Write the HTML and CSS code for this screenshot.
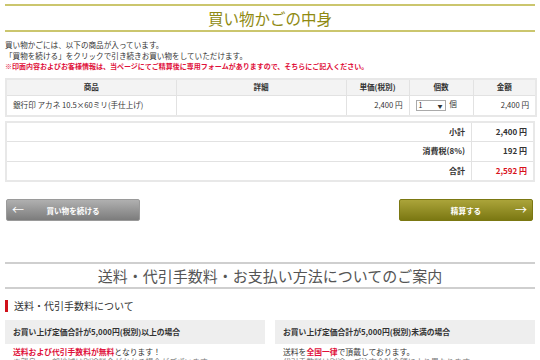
FILE: index.html
```html
<!DOCTYPE html>
<html lang="ja">
<head>
    <meta charset="UTF-8">
    <title>買い物かごの中身</title>
    <link rel="stylesheet" href="styles.css">
</head>
<body>
    <div class="wrap">
        <h2 class="cart-title">買い物かごの中身</h2>
        <div class="intro">
            <p>買い物かごには、以下の商品が入っています。</p>
            <p>「買物を続ける」をクリックで引き続きお買い物をしていただけます。</p>
            <p class="notice">※印面内容およびお客様情報は、当ページにてご精算後に専用フォームがありますので、そちらにご記入ください。</p>
        </div>

        <table class="items">
            <colgroup>
                <col style="width: 170px">
                <col style="width: 170px">
                <col style="width: 63px">
                <col style="width: 64px">
                <col style="width: 63px">
            </colgroup>
            <tr>
                <th>商品</th>
                <th>詳細</th>
                <th>単価(税別)</th>
                <th>個数</th>
                <th>金額</th>
            </tr>
            <tr>
                <td>銀行印 アカネ 10.5×60ミリ(手仕上げ)</td>
                <td></td>
                <td class="num">2,400 円</td>
                <td class="qty"><span class="select">1<i>▼</i></span> 個</td>
                <td class="num">2,400 円</td>
            </tr>
        </table>

        <table class="totals">
            <tr><th>小計</th><td>2,400 円</td></tr>
            <tr><th>消費税(8%)</th><td>192 円</td></tr>
            <tr><th>合計</th><td class="grand">2,592 円</td></tr>
        </table>

        <div class="buttons">
            <a class="btn btn-back" href="#"><span class="arrow">←</span>買い物を続ける</a>
            <a class="btn btn-next" href="#">精算する<span class="arrow">→</span></a>
        </div>

        <h2 class="guide-title">送料・代引手数料・お支払い方法についてのご案内</h2>
        <h3 class="sub">送料・代引手数料について</h3>
        <div class="cases">
            <div class="case">
                <div class="case-head">お買い上げ定価合計が5,000円(税別)以上の場合</div>
                <p><span class="red">送料および代引手数料が無料</span>となります！</p>
                <p class="note">※離島・一部地域は別途料金がかかる場合がございます。</p>
            </div>
            <div class="case">
                <div class="case-head">お買い上げ定価合計が5,000円(税別)未満の場合</div>
                <p>送料を<span class="red">全国一律</span>で頂戴しております。</p>
                <p class="note">代引手数料は別途、ご注文合計金額により異なります。</p>
            </div>
        </div>
    </div>
</body>
</html>
```

FILE: styles.css
```css
body { margin: 0; font-family: "Noto Sans CJK JP", "Noto Sans", sans-serif; color: #333; background: #fff; }
.wrap { padding: 4px 5px 0; }

.cart-title { margin: 0; height: 24px; line-height: 24px; border-top: 2px solid #cbc66e; border-bottom: 2px solid #cbc66e; text-align: center; font-size: 15.5px; font-weight: normal; color: #8f8a12; }

.intro { margin-top: 8px; }
.intro p { margin: 0; font-size: 7.6px; line-height: 10.5px; }
.intro .notice { color: #e0103a; font-weight: bold; font-size: 7px; }

table { width: 100%; border-collapse: collapse; font-size: 7.6px; line-height: 10px; }
.items { margin-top: 6px; border: 2px solid #e8e8e8; table-layout: fixed; }
.items th, .items td { border: 1px solid #e2e2e2; padding: 0 6px; }
.items th { background: #f3f3f3; height: 15px; font-weight: bold; }
.items td { height: 19px; }
.items .num { text-align: right; }
.items .qty { padding-left: 6px; }
.select { display: inline-block; width: 24px; height: 9px; line-height: 9px; border: 1px solid #aaa; padding: 0 2px; font-size: 7px; position: relative; margin-right: 2px; vertical-align: middle; }
.select i { position: absolute; right: 2px; top: 0; font-style: normal; font-size: 5px; }

.totals { margin-top: 4px; border: 2px solid #e8e8e8; }
.totals th, .totals td { border: 1px solid #e2e2e2; height: 18.5px; text-align: right; padding: 0 6px; font-weight: bold; font-size: 8px; }
.totals th { border-right: none; }
.totals td { width: 49px; }
.totals .grand { color: #d8101a; }

.buttons { display: flex; justify-content: space-between; margin-top: 17px; padding: 0 1px; }
.btn { display: flex; align-items: center; justify-content: center; position: relative; width: 134px; height: 22px; border-radius: 2px; color: #fff; text-decoration: none; font-size: 7.6px; font-weight: bold; box-sizing: border-box; }
.btn .arrow { position: absolute; top: 3px; font-size: 12px; font-weight: normal; line-height: 14px; }
.btn-back { background: linear-gradient(#b0b0b0, #7c7c7c); border: 1px solid #9a9a9a; }
.btn-back .arrow { left: 5px; }
.btn-next { background: linear-gradient(#aba43a, #7b7812); border: 1px solid #7b7812; margin-right: 1px; }
.btn-next .arrow { right: 5px; }

.guide-title { margin: 41px 0 0; height: 23px; line-height: 23px; border-top: 2px solid #cfcfcf; border-bottom: 2px solid #cfcfcf; text-align: center; font-size: 15px; font-weight: normal; color: #555; }

.sub { margin: 11px 0 0; border-left: 3px solid #d0101a; padding-left: 6px; font-size: 10px; line-height: 12px; font-weight: normal; color: #333; }

.cases { display: grid; grid-template-columns: 1fr 1fr; gap: 10px; margin-top: 8px; }
.case-head { background: #eeeeee; height: 24px; line-height: 24px; padding: 0 8px; font-size: 7.8px; font-weight: bold; }
.case p { margin: 3px 8px 0; font-size: 7.8px; line-height: 10px; }
.case .note { margin-top: 0; color: #777; }
.red { color: #e0103a; font-weight: bold; }
```
